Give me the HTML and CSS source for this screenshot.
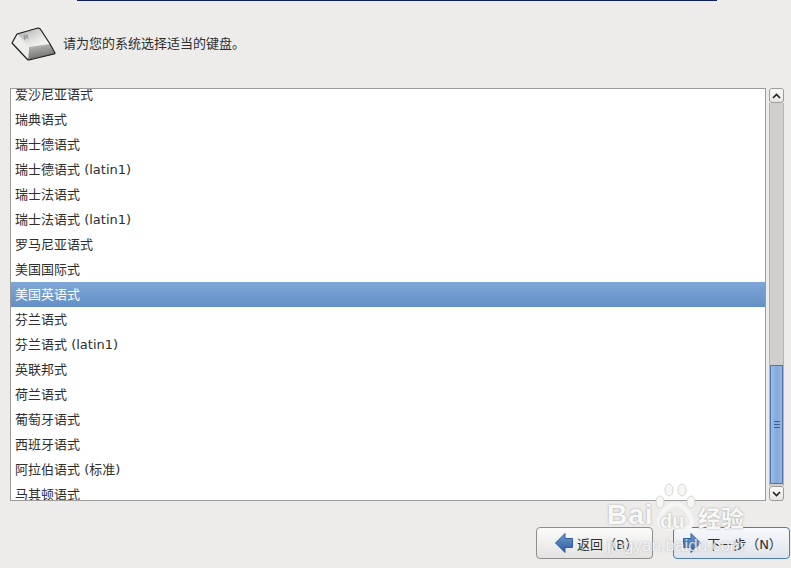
FILE: index.html
```html
<!DOCTYPE html>
<html lang="zh-CN">
<head>
    <meta charset="UTF-8">
    <title>键盘</title>
    <link rel="stylesheet" href="styles.css">
</head>
<body>
<div class="root">

    <div class="top-rule"></div>

    <div class="header">
        <svg class="key-icon" width="46" height="36" viewBox="0 0 46 36">
            <defs>
                <linearGradient id="keyTop" x1="0" y1="0" x2="1" y2="1">
                    <stop offset="0" stop-color="#a8a8a6"/>
                    <stop offset="0.6" stop-color="#e6e6e5"/>
                    <stop offset="1" stop-color="#ffffff"/>
                </linearGradient>
                <linearGradient id="keyFront" x1="0" y1="0" x2="0.3" y2="1">
                    <stop offset="0" stop-color="#c4c4c2"/>
                    <stop offset="1" stop-color="#6c6c6a"/>
                </linearGradient>
            </defs>
            <path d="M6 7 L27 1 Q29 1 30 3 L39 17 L18 20 Z" fill="url(#keyTop)"/>
            <path d="M18 20 L39 17 L44 27 L17 33 Z" fill="url(#keyFront)"/>
            <path d="M1 16 L6 7 L18 20 L17 33 Z" fill="#eeeeec"/>
            <path d="M1 16 L6 7 L27 1 Q29 1 30 3 L39 17 L44 26 Q44 27 43 27 L18 33 Q17 33 16 32 Z" fill="none" stroke="#1e1e1e" stroke-width="1.200" stroke-linejoin="round"/>
            <text class="key-letter" x="13" y="13" transform="rotate(-14 13 13)">R</text>
        </svg>
        <span class="prompt">请为您的系统选择适当的键盘。</span>
    </div>

    <div class="list-area">
        <div class="list-box">
            <ul class="list">
                <li>爱沙尼亚语式</li>
                <li>瑞典语式</li>
                <li>瑞士德语式</li>
                <li>瑞士德语式 (latin1)</li>
                <li>瑞士法语式</li>
                <li>瑞士法语式 (latin1)</li>
                <li>罗马尼亚语式</li>
                <li>美国国际式</li>
                <li class="selected">美国英语式</li>
                <li>芬兰语式</li>
                <li>芬兰语式 (latin1)</li>
                <li>英联邦式</li>
                <li>荷兰语式</li>
                <li>葡萄牙语式</li>
                <li>西班牙语式</li>
                <li>阿拉伯语式 (标准)</li>
                <li>马其顿语式</li>
            </ul>
        </div>
        <div class="scrollbar">
            <div class="scroll-btn">
                <svg width="9" height="6" viewBox="0 0 9 6"><path d="M1 5 L4.500 1.500 L8 5" fill="none" stroke="#222" stroke-width="1.600"/></svg>
            </div>
            <div class="trough">
                <div class="thumb">
                    <span></span><span></span><span></span>
                </div>
            </div>
            <div class="scroll-btn">
                <svg width="9" height="6" viewBox="0 0 9 6"><path d="M1 1 L4.500 4.500 L8 1" fill="none" stroke="#222" stroke-width="1.600"/></svg>
            </div>
        </div>
    </div>

    <div class="footer">
        <button type="button" class="btn">
            <svg width="18" height="20" viewBox="0 0 18 20">
                <defs>
                    <linearGradient id="arrowBlue" x1="0" y1="0" x2="0" y2="1">
                        <stop offset="0" stop-color="#6f9bd0"/>
                        <stop offset="1" stop-color="#2a5a9c"/>
                    </linearGradient>
                </defs>
                <path d="M0.500 10 L10 0.500 V5.500 H17.500 V14.500 H10 V19.500 Z" fill="url(#arrowBlue)" stroke="#2f5f9e" stroke-linejoin="round"/>
            </svg>
            <span>返回（B）</span>
        </button>
        <button type="button" class="btn focused">
            <svg width="18" height="20" viewBox="0 0 18 20">
                <path d="M17.500 10 L8 0.500 V5.500 H0.500 V14.500 H8 V19.500 Z" fill="url(#arrowBlue)" stroke="#2f5f9e" stroke-linejoin="round"/>
            </svg>
            <span>下一步（N）</span>
        </button>
    </div>
</div>

<div class="watermark">
    <svg class="paw" width="46" height="50" viewBox="0 0 46 50">
        <g fill="#f6f6f5" stroke="#d6d5d3" stroke-width="1">
            <ellipse cx="5" cy="19" rx="4" ry="6"/>
            <ellipse cx="14" cy="7" rx="4" ry="6"/>
            <ellipse cx="27" cy="7" rx="4" ry="6"/>
            <ellipse cx="36" cy="19" rx="4" ry="6"/>
        </g>
        <path d="M20 21 C12 21 3 34 4 40 C5 47 14 46 20 44 C26 46 36 47 37 40 C38 34 28 21 20 21 Z" fill="none" stroke="#f6f6f5" stroke-width="4"/>
    </svg>
    <span class="wm-bai">Bai</span>
    <span class="wm-du">du</span>
    <span class="wm-cn">经验</span>
    <span class="wm-url">jingyan.baidu.com</span>
</div>
</body>
</html>
```

FILE: styles.css
```css
* {
    box-sizing: border-box;
}

html, body {
    width: 100%;
    height: 100%;
}

body {
    margin: 0;
    padding: 0;
    background: #edeceb;
    color: #2e2e2e;
    font-family: "DejaVu Sans", "Noto Sans CJK SC", sans-serif;
    font-size: 13px;
    overflow: hidden;
}

.root {
    display: flex;
    flex-direction: column;
    height: 100%;
}

.top-rule {
    width: 640px;
    height: 1px;
    margin-left: 77px;
    background: #10205c;
}

.header {
    display: flex;
    align-items: center;
    gap: 6px;
    height: 36px;
    margin-top: 26px;
    padding-left: 11px;
}

.key-icon {
    flex: none;
}

.key-letter {
    font-family: "Liberation Sans", sans-serif;
    font-size: 7px;
    font-weight: bold;
    fill: #8c8c8a;
}

.prompt {
    margin-bottom: 5px;
}

.list-area {
    display: flex;
    gap: 3px;
    height: 413px;
    margin-top: 25px;
    margin-left: 10px;
}

.list-box {
    width: 756px;
    height: 100%;
    border: 1px solid #9c9b99;
    background: #fff;
    overflow: hidden;
}

.list {
    list-style: none;
    margin: -7px 0 0 0;
    padding: 0;
}

.list li {
    height: 25px;
    line-height: 25px;
    padding-left: 4px;
    white-space: nowrap;
}

.list li.selected {
    background: linear-gradient(#7fa6d6, #6290c6);
    color: #fff;
}

.scrollbar {
    display: flex;
    flex-direction: column;
    width: 15px;
    height: 100%;
}

.scroll-btn {
    display: flex;
    align-items: center;
    justify-content: center;
    flex: none;
    height: 15px;
    border: 1px solid #9c9b99;
    border-radius: 3px;
    background: linear-gradient(#fbfbfa, #e6e5e3);
}

.trough {
    flex: 1;
    display: flex;
    flex-direction: column;
    justify-content: flex-end;
    padding-bottom: 2px;
    background: #d0cfcd;
    border-left: 1px solid #b5b4b2;
    border-right: 1px solid #b5b4b2;
}

.thumb {
    display: flex;
    flex-direction: column;
    align-items: center;
    justify-content: center;
    gap: 2px;
    height: 119px;
    border: 1px solid #4f76ab;
    background: linear-gradient(90deg, #9dbce4, #86a9d9 50%, #96b6e0);
}

.thumb span {
    width: 6px;
    height: 1px;
    background: #3d5f92;
}

.footer {
    display: flex;
    justify-content: flex-end;
    gap: 20px;
    margin-top: 26px;
    padding-right: 1px;
}

.btn {
    display: flex;
    align-items: center;
    justify-content: center;
    gap: 4px;
    width: 117px;
    height: 32px;
    padding: 0 0 0 4px;
    border: 1px solid #8f8e8c;
    border-radius: 4px;
    background: linear-gradient(#fbfbfa, #e4e3e1);
    color: #2e2e2e;
    font: inherit;
}

.btn.focused {
    gap: 6px;
    padding-left: 2px;
    border-color: #4f7cb5;
    background: linear-gradient(#f6f8fb, #dfe4ec);
}

/* baidu stamp over the picture */
.watermark {
    position: absolute;
    left: 600px;
    top: 480px;
    width: 160px;
    height: 80px;
    color: #f8f8f7;
    pointer-events: none;
}

.paw {
    position: absolute;
    left: 55px;
    top: 3px;
}

.watermark span {
    position: absolute;
    white-space: nowrap;
    text-shadow: 0 0 2px rgba(130, 130, 130, 0.8);
}

.wm-bai {
    left: 7px;
    top: 19px;
    font-family: "Liberation Sans", sans-serif;
    font-size: 28px;
    font-weight: bold;
    letter-spacing: 1px;
}

.wm-du {
    left: 60px;
    top: 30px;
    font-family: "Liberation Sans", sans-serif;
    font-size: 20px;
    font-weight: bold;
}

.wm-cn {
    left: 98px;
    top: 20px;
    font-size: 23px;
    font-weight: bold;
}

.wm-url {
    left: 7px;
    top: 56px;
    font-family: "Liberation Sans", sans-serif;
    font-size: 17px;
    opacity: 0.75;
}
```
